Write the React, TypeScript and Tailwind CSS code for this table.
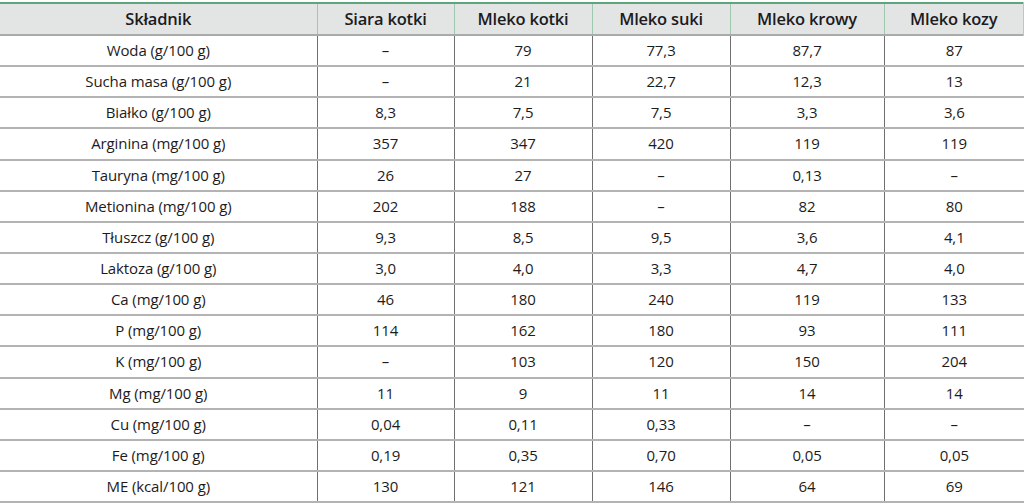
const headers = ["Składnik", "Siara kotki", "Mleko kotki", "Mleko suki", "Mleko krowy", "Mleko kozy"];

const rows: string[][] = [
  ["Woda (g/100 g)", "–", "79", "77,3", "87,7", "87"],
  ["Sucha masa (g/100 g)", "–", "21", "22,7", "12,3", "13"],
  ["Białko (g/100 g)", "8,3", "7,5", "7,5", "3,3", "3,6"],
  ["Arginina (mg/100 g)", "357", "347", "420", "119", "119"],
  ["Tauryna (mg/100 g)", "26", "27", "–", "0,13", "–"],
  ["Metionina (mg/100 g)", "202", "188", "–", "82", "80"],
  ["Tłuszcz (g/100 g)", "9,3", "8,5", "9,5", "3,6", "4,1"],
  ["Laktoza (g/100 g)", "3,0", "4,0", "3,3", "4,7", "4,0"],
  ["Ca (mg/100 g)", "46", "180", "240", "119", "133"],
  ["P (mg/100 g)", "114", "162", "180", "93", "111"],
  ["K (mg/100 g)", "–", "103", "120", "150", "204"],
  ["Mg (mg/100 g)", "11", "9", "11", "14", "14"],
  ["Cu (mg/100 g)", "0,04", "0,11", "0,33", "–", "–"],
  ["Fe (mg/100 g)", "0,19", "0,35", "0,70", "0,05", "0,05"],
  ["ME (kcal/100 g)", "130", "121", "146", "64", "69"],
];

const widths = [317, 137, 138, 138, 154, 140];

export default function App() {
  return (
    <div className="w-[1024px] h-[504px] overflow-hidden bg-white pt-[2px] font-['Open_Sans',sans-serif] text-[#1d1b1c]">
      <table className="w-[1024px] table-fixed border-collapse">
        <colgroup>
          {widths.map((w, i) => (
            <col key={i} style={{ width: w }} />
          ))}
        </colgroup>
        <thead>
          <tr className="h-[32px] bg-[#e3e4e4] border-t-2 border-t-[#5ea57c] border-b-2 border-b-[#a9abab]">
            {headers.map((h, i) => (
              <th
                key={h}
                className={
                  "p-0 text-center text-[16.5px] font-semibold tracking-[-0.2px] " +
                  (i < headers.length - 1 ? "border-r border-r-[#9fc9ae]" : "border-r-2 border-r-[#b5ccbd]")
                }
              >
                {h}
              </th>
            ))}
          </tr>
        </thead>
        <tbody>
          {rows.map((r, ri) => (
            <tr key={ri} className="h-[31.15px] border-b-2 border-b-[#b3b3b3]">
              {r.map((c, ci) => (
                <td
                  key={ci}
                  className={
                    "p-0 text-center text-[15px] leading-none tracking-[-0.1px] " +
                    (ci < r.length - 1 ? "border-r border-r-[#6f6f6f]" : "")
                  }
                >
                  {c}
                </td>
              ))}
            </tr>
          ))}
        </tbody>
      </table>
    </div>
  );
}
